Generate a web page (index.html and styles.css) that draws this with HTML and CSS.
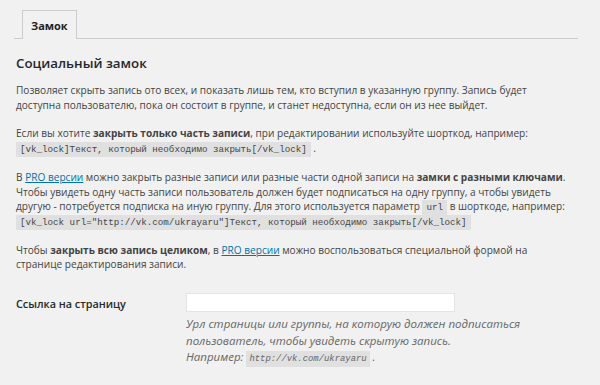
FILE: index.html
```html
<!DOCTYPE html>
<html lang="ru">
<head>
  <meta charset="UTF-8" />
  <title>Социальный замок</title>
  <link rel="stylesheet" href="styles.css">
</head>
<body>

  <div class="wrap">
    <h2 class="nav-tabs">
      <a href="#" class="nav-tab active">Замок</a>
    </h2>

    <h3 class="title">Социальный замок</h3>

    <p>Позволяет скрыть запись ото всех, и показать лишь тем, кто вступил в указанную группу. Запись будет доступна пользователю, пока он состоит в группе, и станет недоступна, если он из нее выйдет.</p>

    <p>Если вы хотите <strong>закрыть только часть записи</strong>, при редактировании используйте шорткод, например:<br>
    <code>[vk_lock]Текст, который необходимо закрыть[/vk_lock]</code> .</p>

    <p>В <a href="#">PRO версии</a> можно закрыть разные записи или разные части одной записи на <strong>замки с разными ключами</strong>.
    Чтобы увидеть одну часть записи пользователь должен будет подписаться на одну группу, а чтобы увидеть другую - потребуется подписка на иную группу. Для этого используется параметр <code>url</code> в шорткоде, например:<br>
    <code>[vk_lock url="http://vk.com/ukrayaru"]Текст, который необходимо закрыть[/vk_lock]</code></p>

    <p>Чтобы <strong>закрыть всю запись целиком</strong>, в <a href="#">PRO версии</a> можно воспользоваться специальной формой на странице редактирования записи.</p>

    <div class="form-row">
      <label for="page-url">Ссылка на страницу</label>
      <div class="field">
        <input type="text" id="page-url">
        <p class="description">Урл страницы или группы, на которую должен подписаться пользователь, чтобы увидеть скрытую запись.<br>
        Например: <code>http://vk.com/ukrayaru</code> .</p>
      </div>
    </div>
  </div>

</body>
</html>
```

FILE: styles.css
```css
body {
  margin: 0;
  padding: 0;
  background-color: #f1f1f1;
  color: #444;
  font-family: "Open Sans", sans-serif;
  font-size: 10.1px;
}

.wrap {
  padding: 10px 20px 0 16px;
  width: 550px;
}

.nav-tabs {
  margin: 0 0 0 -2px;
  padding: 0 0 0 8px;
  border-bottom: 1px solid #ccc;
  display: flex;
  width: 556px;
}

.nav-tab {
  display: block;
  padding: 0 8px;
  height: 28px;
  line-height: 30px;
  border: 1px solid #ccc;
  border-bottom: none;
  margin-bottom: -1px;
  background-color: #f1f1f1;
  color: #222;
  font-size: 11px;
  font-weight: 700;
  text-decoration: none;
}

.title {
  margin: 15px 0 11px;
  font-size: 13.3px;
  font-weight: 600;
  color: #23282d;
}

p {
  margin: 0 0 14px;
  line-height: 14.7px;
}

strong {
  font-weight: 700;
}

a {
  color: #0073aa;
}

code {
  font-family: "Liberation Mono", monospace;
  font-size: 9.2px;
  line-height: 1;
  background-color: rgba(0, 0, 0, 0.07);
  padding: 2px 4px;
}

.form-row {
  display: flex;
  padding-top: 7px;
}

.form-row label {
  flex-shrink: 0;
  width: 170px;
  font-size: 10.8px;
  font-weight: 600;
  color: #23282d;
  padding-top: 3px;
}

.field {
  width: 350px;
}

.field input {
  display: block;
  width: 261px;
  height: 17px;
  border: 1px solid #e4e4e4;
  background-color: #fff;
  margin: 0 0 4px;
  padding: 0 3px;
  box-sizing: content-box;
}

.description {
  font-size: 11.5px;
  font-style: italic;
  color: #666;
  line-height: 16.5px;
}

.description code {
  font-size: 8.9px;
  padding: 3px 3px;
}
```
